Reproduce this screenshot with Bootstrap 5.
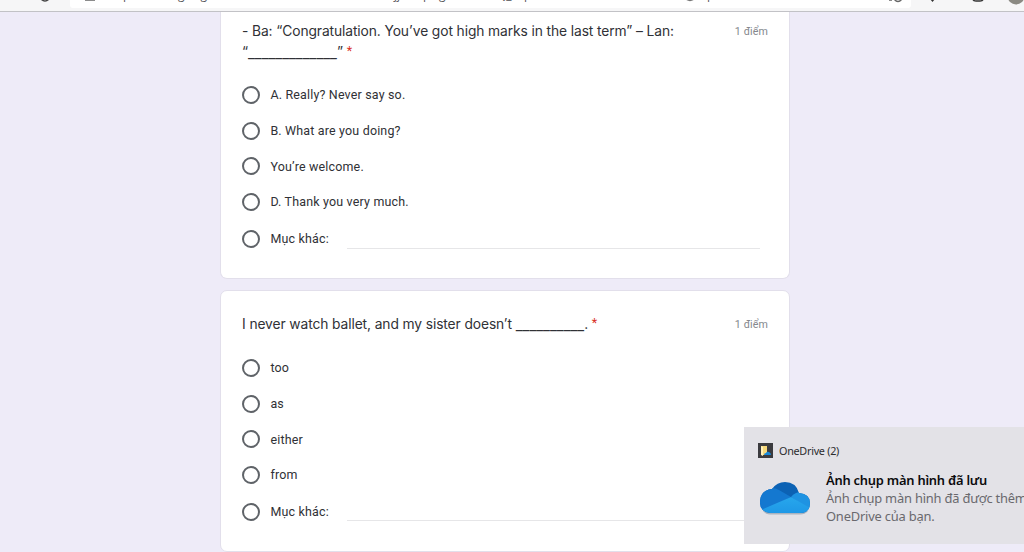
<!DOCTYPE html>
<html lang="vi">
<head>
  <meta charset="utf-8">
  <meta name="viewport" content="width=device-width, initial-scale=1">
  <title>Google Forms</title>
  <link href="https://cdn.jsdelivr.net/npm/bootstrap@5.3.3/dist/css/bootstrap.min.css" rel="stylesheet">
  <script src="https://cdn.jsdelivr.net/npm/bootstrap@5.3.3/dist/js/bootstrap.bundle.min.js"></script>
  <style>
    body { background: #eeebf8; height: 552px; font-family: Roboto, "Liberation Sans", sans-serif; color: #303136; }
    .browser-bar { height: 12px; background: #f6f6f7; border-bottom: 1px solid #c2c2c6; }
    .browser-bar svg { display: block; }
    .form-col { width: 570px; margin-left: 220px; gap: 11px; }
    .question { border: 1px solid #e2dfeb; border-radius: 7px; padding: 0 21px; }
    .question-first { height: 267px; border-top: 0; border-radius: 0 0 7px 7px; padding-top: 9px; }
    .question-next { height: 262px; padding-top: 23px; }
    .q-title { font-family: Inter, sans-serif; font-size: 13.8px; line-height: 21px; letter-spacing: -.1px; color: #303136; }
    .q-blank { font-size: 15px; line-height: 1; letter-spacing: 0; vertical-align: -1px; }
    .req { color: #d93025; font-family: Roboto, sans-serif; font-size: 12.5px; line-height: 1; vertical-align: 2px; }
    .points { font-size: 10.7px; line-height: 21px; color: #85888d; letter-spacing: .08px; }
    .choices { margin-top: 15px; }
    .question-next .choices { margin-top: 16px; }
    .choice { height: 35.6px; gap: 10.4px; font-size: 12.46px; letter-spacing: .18px; }
    .choice .form-check-input { width: 18px; height: 18px; border: 2px solid #5f6368; margin: 0 0 1px; background-color: #fff; }
    .choice-other { height: 38px; }
    .other-line { flex: none; width: 413px; height: 19px; margin-left: 8px; border-bottom: 1.5px solid #e6e6e8; }
    .question-next .other-line { height: 18px; }
    .toast-win { left: 744px; top: 427px; width: 280px; height: 117px; background: #e3e2e7; font-family: "Noto Sans", "Open Sans", sans-serif; padding: 15px 0 0 14px; }
    .toast-app { font-size: 10.8px; line-height: 17px; gap: 6px; letter-spacing: -.28px; color: #2c2c2e; }
    .toast-cloud { margin: 13px 16px 0 2px; }
    .toast-msg { font-size: 12.9px; line-height: 18px; letter-spacing: -.2px; color: #6a696e; padding-top: 12px; }
    .toast-title { color: #0c0c0e; font-weight: 600; letter-spacing: -.22px; }
  </style>
</head>
<body class="position-relative overflow-hidden">
  <!-- lower edge of the browser toolbar -->
  <div class="browser-bar">
    <svg width="1024" height="11" font-family="Open Sans, sans-serif" font-size="12" fill="#55565a">
      <path d="M70 0H911V5Q911 8 908 8H73Q70 8 70 5Z" fill="#fff"/>
      <path d="M41 -1Q45 3 49 -1" fill="none" stroke="#444" stroke-width="1.5"/>
      <path d="M85 0H95" stroke="#666" stroke-width="1.5"/>
      <text x="107" y="-1">http</text>
      <text x="178" y="-1" textLength="29">goog</text>
      <text x="394" y="-1">jj</text>
      <text x="423" y="-1">p</text>
      <text x="439" y="-1">g</text>
      <text x="497" y="-1">Q_</text>
      <text x="524" y="-1">p</text>
      <text x="707" y="-1">p</text>
      <path d="M686 -1Q690 2 694 -1" fill="none" stroke="#777" stroke-width="1.3"/>
      <path d="M889 0h3M894 -1Q898 4 902 -1" fill="none" stroke="#666" stroke-width="1.4"/>
      <path d="M930 -1L932.5 2L935 -1Z" fill="#333"/>
      <path d="M973 -1Q973 1 976 1H980Q983 1 983 -1" fill="none" stroke="#333" stroke-width="1.5"/>
      <circle cx="1016" cy="-4" r="8.5" fill="#8b8a83"/>
    </svg>
  </div>

  <form class="form-col d-flex flex-column">
    <section class="question question-first bg-white">
      <div class="d-flex justify-content-between">
        <div class="q-title">- Ba: “Congratulation. You’ve got high marks in the last term” – Lan:<br>“<span class="q-blank">_____________</span>” <span class="req">*</span></div>
        <div class="points">1 điểm</div>
      </div>
      <div class="choices">
        <label class="choice d-flex align-items-center"><input class="form-check-input" type="radio" name="q1">A. Really? Never say so.</label>
        <label class="choice d-flex align-items-center"><input class="form-check-input" type="radio" name="q1">B. What are you doing?</label>
        <label class="choice d-flex align-items-center"><input class="form-check-input" type="radio" name="q1">You’re welcome.</label>
        <label class="choice d-flex align-items-center"><input class="form-check-input" type="radio" name="q1">D. Thank you very much.</label>
        <label class="choice choice-other d-flex align-items-center"><input class="form-check-input" type="radio" name="q1">Mục khác:<span class="other-line"></span></label>
      </div>
    </section>

    <section class="question question-next bg-white">
      <div class="d-flex justify-content-between">
        <div class="q-title">I never watch ballet, and my sister doesn’t <span class="q-blank">__________</span>. <span class="req">*</span></div>
        <div class="points">1 điểm</div>
      </div>
      <div class="choices">
        <label class="choice d-flex align-items-center"><input class="form-check-input" type="radio" name="q2">too</label>
        <label class="choice d-flex align-items-center"><input class="form-check-input" type="radio" name="q2">as</label>
        <label class="choice d-flex align-items-center"><input class="form-check-input" type="radio" name="q2">either</label>
        <label class="choice d-flex align-items-center"><input class="form-check-input" type="radio" name="q2">from</label>
        <label class="choice choice-other d-flex align-items-center"><input class="form-check-input" type="radio" name="q2">Mục khác:<span class="other-line"></span></label>
      </div>
    </section>
  </form>

  <!-- OneDrive notification -->
  <div class="toast-win position-absolute overflow-hidden">
    <div class="toast-app d-flex align-items-center">
      <svg width="15" height="15" viewBox="0 0 15 15">
        <path d="M0 0H15V15H0Z" fill="#3b3b3f"/>
        <path d="M3 3H9V12H3Z" fill="#f5d77a"/>
        <path d="M3 3L5 4V13L3 12Z" fill="#fff0b8"/>
        <path d="M6 12Q6 10 8 10Q9 8 11 9Q13 10 13 12Z" fill="#1687d9"/>
      </svg>
      <span>OneDrive (2)</span>
    </div>
    <div class="d-flex">
      <svg class="toast-cloud flex-shrink-0" width="50" height="50" viewBox="0 0 50 50">
        <defs>
          <clipPath id="cloud"><path d="M10 41A10 10 0 0 1 0 31Q0 18 12 17Q17 10 25 10Q36 10 39 21Q50 22 50 31Q50 41 40 41Z"/></clipPath>
          <linearGradient id="front" x1="0" y1="0" x2="0" y2="1">
            <stop offset="0" stop-color="#27a7ec"/>
            <stop offset="1" stop-color="#1a8fe3"/>
          </linearGradient>
        </defs>
        <path d="M3 39Q6 42.500 10 42.500H40Q45 42.500 48 39Z" fill="#a9b3c0"/>
        <g clip-path="url(#cloud)">
          <path d="M0 0H50V50H0Z" fill="#0c62b4"/>
          <path d="M0 16H12Q16 16 19 18L31 25L0 41Z" fill="#1478d0"/>
          <path d="M31 25Q35 20 41 20H50V38Z" fill="#1f93e2"/>
          <path d="M1 38L31 25L50 36V50H5Z" fill="url(#front)"/>
        </g>
      </svg>
      <div class="toast-msg text-nowrap">
        <div class="toast-title">Ảnh chụp màn hình đã lưu</div>
        <div>Ảnh chụp màn hình đã được thêm vào</div>
        <div>OneDrive của bạn.</div>
      </div>
    </div>
  </div>
</body>
</html>
